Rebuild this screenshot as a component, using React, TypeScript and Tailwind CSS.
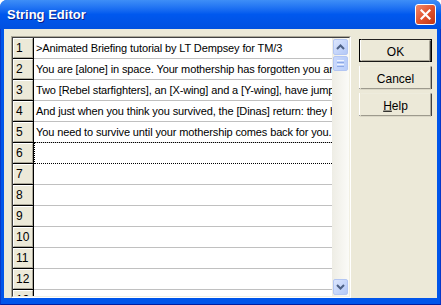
import React from "react";

const rows: string[] = [
  ">Animated Briefing tutorial by LT Dempsey for TM/3",
  "You are [alone] in space. Your mothership has forgotten you and left you behind.",
  "Two [Rebel starfighters], an [X-wing] and a [Y-wing], have jumped in to attack you.",
  "And just when you think you survived, the [Dinas] return: they have come back for more.",
  "You need to survive until your mothership comes back for you.",
  "",
  "",
  "",
  "",
  "",
  "",
  "",
  "",
];

function Chevron({ up }: { up?: boolean }) {
  return (
    <svg width="9" height="6" viewBox="0 0 9 6">
      <polyline
        points={up ? "1,5 4.5,1.5 8,5" : "1,1 4.5,4.5 8,1"}
        fill="none"
        stroke="#4D6185"
        strokeWidth="2"
      />
    </svg>
  );
}

function ScrollBtn({ children }: { children: React.ReactNode }) {
  return (
    <div className="w-[15px] h-[16px] rounded-[2px] border border-[#B3C6F3] bg-gradient-to-br from-[#DCE6FD] to-[#B3C8F7] flex items-center justify-center">
      {children}
    </div>
  );
}

function ClassicButton({ children, isDefault }: { children: React.ReactNode; isDefault?: boolean }) {
  return (
    <div className={`w-[73px] h-[23px] flex bg-[#ECE9D8] ${isDefault ? "border border-black" : ""}`}>
      <div className="flex-1 border border-t-white border-l-white border-b-[#404040] border-r-[#404040]">
        <div className="w-full h-full border border-t-[#ECE9D8] border-l-[#ECE9D8] border-b-[#ACA899] border-r-[#ACA899] flex items-center justify-center text-[12px] [transform:scaleY(1.12)] text-black">
          {children}
        </div>
      </div>
    </div>
  );
}

export default function App() {
  return (
    <div className="w-[441px] h-[305px] flex flex-col bg-white font-['Liberation_Sans',_Arial,_sans-serif]">
      <div className="w-[441px] h-[305px] flex flex-col rounded-t-[7px] bg-[#0055EA] overflow-hidden">
        {/* Title bar */}
        <div className="h-[29px] flex items-center justify-between pl-[7px] pr-[5px] bg-gradient-to-b from-[#3E8EF7] via-[#0058EE] to-[#0050E0]">
          <span className="text-white font-bold text-[13px] [text-shadow:1px_1px_#0A1E8A] leading-none pb-[1px]">
            String Editor
          </span>
          <div className="w-[21px] h-[21px] rounded-[3px] border border-white bg-gradient-to-br from-[#F0896A] via-[#E2532E] to-[#C23512] flex items-center justify-center">
            <svg width="11" height="11" viewBox="0 0 11 11">
              <path d="M1.5 1.5 L9.5 9.5 M9.5 1.5 L1.5 9.5" stroke="white" strokeWidth="2.2" strokeLinecap="square" />
            </svg>
          </div>
        </div>
        {/* Body with frame */}
        <div className="flex-1 flex px-[3px] pb-[6px] border-l border-l-[#0838C8] border-r border-r-[#0838C8] border-b border-b-[#001EA0]">
          <div className="flex-1 bg-[#ECE9D8] flex pl-[7px] pt-[7px]">
            {/* Grid */}
            <div className="w-[340px] h-[262px] border border-t-[#ACA899] border-l-[#ACA899] border-b-white border-r-white">
              <div className="w-full h-full border border-t-[#404040] border-l-[#404040] border-b-[#F1EFE2] border-r-[#F1EFE2] flex bg-white">
                <div className="w-[319px] h-full overflow-hidden flex flex-col">
                  {rows.map((text, i) => (
                    <div key={i} className="flex h-[21px] shrink-0">
                      <div className="w-[21px] h-[21px] border-r border-b border-black bg-[#ECE9D8]">
                        <div className="w-full h-full border border-t-white border-l-white border-b-[#ACA899] border-r-[#ACA899] text-[12px] leading-[18px] pl-[2px] text-black">
                          {i + 1}
                        </div>
                      </div>
                      {i === 5 ? (
                        <div className="w-[298px] -mt-[1px] h-[22px] border-t border-l border-b border-dotted border-black" />
                      ) : (
                        <div className="w-[298px] h-[21px] border-b border-[#C0C0C0] text-[11px] tracking-[-0.12px] leading-[20px] pl-[2px] whitespace-nowrap overflow-hidden text-black">
                          {text}
                        </div>
                      )}
                    </div>
                  ))}
                </div>
                {/* Scrollbar */}
                <div className="w-[17px] h-full bg-gradient-to-r from-[#EEEDE5] to-[#FBFBF8] flex flex-col items-center justify-between py-[1px]">
                  <div className="flex flex-col gap-[1px]">
                    <ScrollBtn>
                      <Chevron up />
                    </ScrollBtn>
                    <div className="w-[15px] h-[15px] rounded-[2px] border border-[#B3C6F3] bg-gradient-to-r from-[#C9D8FC] to-[#B8CDF9] flex flex-col items-center justify-center gap-[1px]">
                      <div className="w-[7px] h-[1px] bg-[#EEF3FE]" />
                      <div className="w-[7px] h-[1px] bg-[#8CA8E6]" />
                      <div className="w-[7px] h-[1px] bg-[#EEF3FE]" />
                      <div className="w-[7px] h-[1px] bg-[#8CA8E6]" />
                    </div>
                  </div>
                  <ScrollBtn>
                    <Chevron />
                  </ScrollBtn>
                </div>
              </div>
            </div>
            {/* Buttons */}
            <div className="ml-[8px] mt-[3px] flex flex-col gap-[4px]">
              <ClassicButton isDefault>OK</ClassicButton>
              <ClassicButton>Cancel</ClassicButton>
              <ClassicButton>
                <span>
                  <span className="underline">H</span>elp
                </span>
              </ClassicButton>
            </div>
          </div>
        </div>
      </div>
    </div>
  );
}
